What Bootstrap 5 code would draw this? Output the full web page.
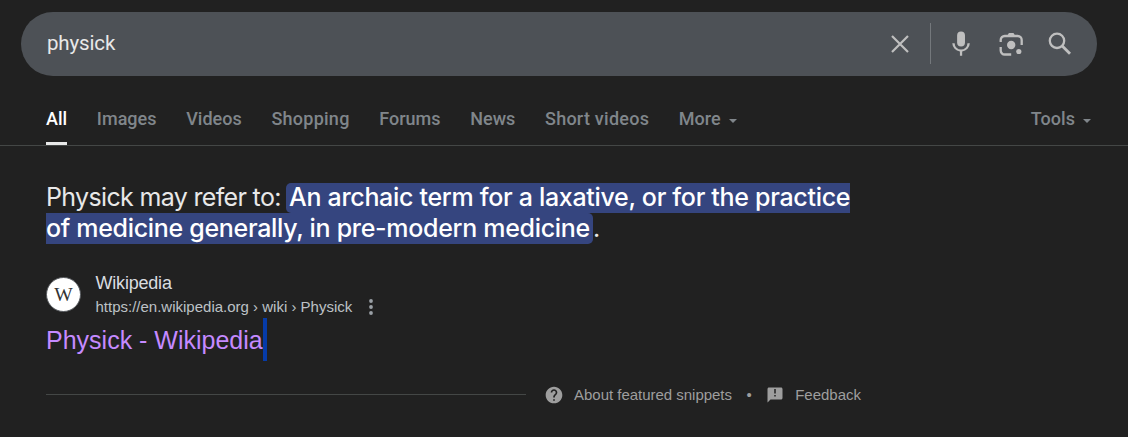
<!DOCTYPE html>
<html lang="en">
<head>
<meta charset="utf-8">
<meta name="viewport" content="width=device-width, initial-scale=1">
<title>physick - Search</title>
<link href="https://cdn.jsdelivr.net/npm/bootstrap@5.3.0/dist/css/bootstrap.min.css" rel="stylesheet">
<style>
body { background: #212121; color: #e8e8e8; font-family: "Liberation Sans", Arial, sans-serif; height: 437px; overflow: hidden; }
.search-bar { height: 64px; margin: 12px 31px 0 21px; padding: 0 25px 0 26px; background: #4d5156; color: #bfbfbf; }
.query { font: 20.5px/26px Roboto, sans-serif; color: #e8e8e8; letter-spacing: -.15px; padding-bottom: 2px; }
.divider { width: 1px; height: 41px; background: #74787c; margin: 0 17px 2px 18px; }
.tabs { height: 70px; padding: 0 37px 0 46px; border-bottom: 1px solid #444746; font: 500 18px/24px Roboto, sans-serif; color: #80868b; }
.tab-item { height: 69px; padding-top: 31px; margin-right: 29.6px; white-space: nowrap; letter-spacing: .03px; }
.tab-item.current { color: #fff; border-bottom: 3px solid #e8e8e8; }
.tab-item.loose { letter-spacing: .25px; }
.caret { display: inline-block; border: 4.5px solid transparent; border-top-color: currentColor; border-bottom: 0; margin-left: 8px; vertical-align: 2.5px; }
.snippet { margin: 37px 0 0 46px; font: 25px/31px Inter, sans-serif; white-space: nowrap; letter-spacing: -.31px; }
.lead-in { width: 240px; line-height: 29px; letter-spacing: -.66px; }
.hl { background: #35457f; color: #fff; font-weight: 500; height: 31px; }
.hl-start { border-radius: 5px 0 0 5px; height: 30px; line-height: 29px; padding-left: 3px; }
.hl-end { border-radius: 0 5px 5px 0; padding-right: 3px; }
.source { margin: 26px 0 0 46px; }
.source-text { margin-left: 14.5px; padding-top: 1px; }
.site-name { font-size: 18px; line-height: 24px; color: #dadce0; letter-spacing: -.2px; }
.site-url { font-size: 15px; line-height: 24px; color: #bdc1c6; }
.result-title { margin: -1px 0 0 46px; height: 43px; font-size: 25px; line-height: 44px; color: #c58aff; }
.cursor { width: 4px; height: 43px; background: #063ba8; }
.footer-row { margin: 23px 0 0 46px; width: 815px; height: 22px; font-size: 15px; color: #9e9e9e; }
.rule { height: 1px; width: 480px; background: #444746; margin: 0 18px 2px 0; }
.about { margin-left: 10px; letter-spacing: -.02px; }
.sep { margin: 0 14.5px; }
</style>
</head>
<body>
<header>
  <div class="search-bar d-flex align-items-center rounded-pill">
    <div class="query flex-grow-1">physick</div>
    <svg width="24" height="24" viewBox="0 0 24 24" fill="none" stroke="currentColor" stroke-width="2.2"><path d="M4 4l16 16M20 4L4 20"/></svg>
    <div class="divider"></div>
    <svg width="27" height="27" viewBox="0 0 24 24" fill="currentColor"><path d="M11.600 13.700a3.500 3.500 0 0 0 3.500-3.500V3.900a3.500 3.500 0 0 0-7 0v6.300A3.500 3.500 0 0 0 11.600 13.700zM17.300 10.800a5.700 5.700 0 0 1-11.400 0H3.800a7.800 7.800 0 0 0 6.800 7.400V21.900h2v-3.700a7.800 7.800 0 0 0 6.800-7.400z"/></svg>
    <svg class="ms-4" width="25" height="25" viewBox="0 0 25 25" fill="none" stroke="currentColor" stroke-width="2.300"><path d="M1.700 10V8a4 4 0 0 1 4-4h13a4 4 0 0 1 4 4V13M1.700 15v3.500a4 4 0 0 0 4 4h6.500"/><path fill="currentColor" stroke="none" d="M8.400 3.500l1.500-2.500h4.600L16 3.500z"/><circle cx="12.200" cy="13" r="4.200" fill="currentColor" stroke="none"/><circle cx="19.800" cy="19.500" r="2.600" fill="currentColor" stroke="none"/></svg>
    <svg class="ms-4" width="24" height="24" viewBox="0 0 24 24" fill="none" stroke="currentColor" stroke-width="2.300"><circle cx="9" cy="8.800" r="7.200"/><path d="M14 13.800l8 8" stroke-width="2.800"/></svg>
  </div>
  <nav class="tabs d-flex">
    <div class="tab-item current">All</div>
    <div class="tab-item">Images</div>
    <div class="tab-item">Videos</div>
    <div class="tab-item loose">Shopping</div>
    <div class="tab-item">Forums</div>
    <div class="tab-item">News</div>
    <div class="tab-item loose">Short videos</div>
    <div class="tab-item">More<span class="caret"></span></div>
    <div class="tab-item ms-auto me-0">Tools<span class="caret"></span></div>
  </nav>
</header>
<main>
  <div class="snippet">
    <div class="d-flex"><span class="lead-in">Physick may refer to:</span><span class="hl hl-start">An archaic term for a laxative, or for the practice</span></div>
    <div class="d-flex"><span class="hl hl-end">of medicine generally, in pre-modern medicine</span><span>.</span></div>
  </div>
  <div class="source d-flex align-items-center">
    <svg width="35" height="35" viewBox="0 0 35 35"><circle cx="17.500" cy="17.500" r="17" fill="#fff" stroke="#55585c"/><text x="17.500" y="24" text-anchor="middle" font-family="Liberation Serif, serif" font-size="18" fill="#333" textLength="18.500" lengthAdjust="spacingAndGlyphs">W</text></svg>
    <div class="source-text">
      <div class="site-name">Wikipedia</div>
      <div class="site-url d-flex align-items-center">https://en.wikipedia.org › wiki › Physick
        <svg class="ms-3" width="6" height="16" viewBox="0 0 6 16" fill="#9aa0a6"><circle cx="3" cy="2" r="1.900"/><circle cx="3" cy="8" r="1.900"/><circle cx="3" cy="14" r="1.900"/></svg>
      </div>
    </div>
  </div>
  <div class="result-title d-flex"><span>Physick - Wikipedia</span><span class="cursor"></span></div>
  <div class="footer-row d-flex align-items-center">
    <div class="rule"></div>
    <svg width="20" height="20" viewBox="0 0 24 24" fill="#9e9e9e"><path d="M12 2C6.480 2 2 6.480 2 12s4.480 10 10 10 10-4.480 10-10S17.520 2 12 2zm1 17h-2v-2h2v2zm2.070-7.750l-.9.920C13.450 12.900 13 13.500 13 15h-2v-.5c0-1.100.45-2.100 1.170-2.830l1.240-1.260c.37-.36.59-.86.59-1.410 0-1.100-.9-2-2-2s-2 .9-2 2H8c0-2.210 1.790-4 4-4s4 1.790 4 4c0 .88-.36 1.680-.93 2.250z"/></svg>
    <span class="about">About featured snippets</span>
    <span class="sep">•</span>
    <svg width="18" height="18" viewBox="0 0 24 24" fill="#9e9e9e"><path d="M20 2H4c-1.100 0-2 .9-2 2v18l4-4h14c1.100 0 2-.9 2-2V4c0-1.100-.9-2-2-2zm-7 12h-2v-2h2v2zm0-4h-2V4h2v6z"/></svg>
    <span class="ms-auto">Feedback</span>
  </div>
</main>
<script src="https://cdn.jsdelivr.net/npm/bootstrap@5.3.0/dist/js/bootstrap.bundle.min.js"></script>
</body>
</html>
